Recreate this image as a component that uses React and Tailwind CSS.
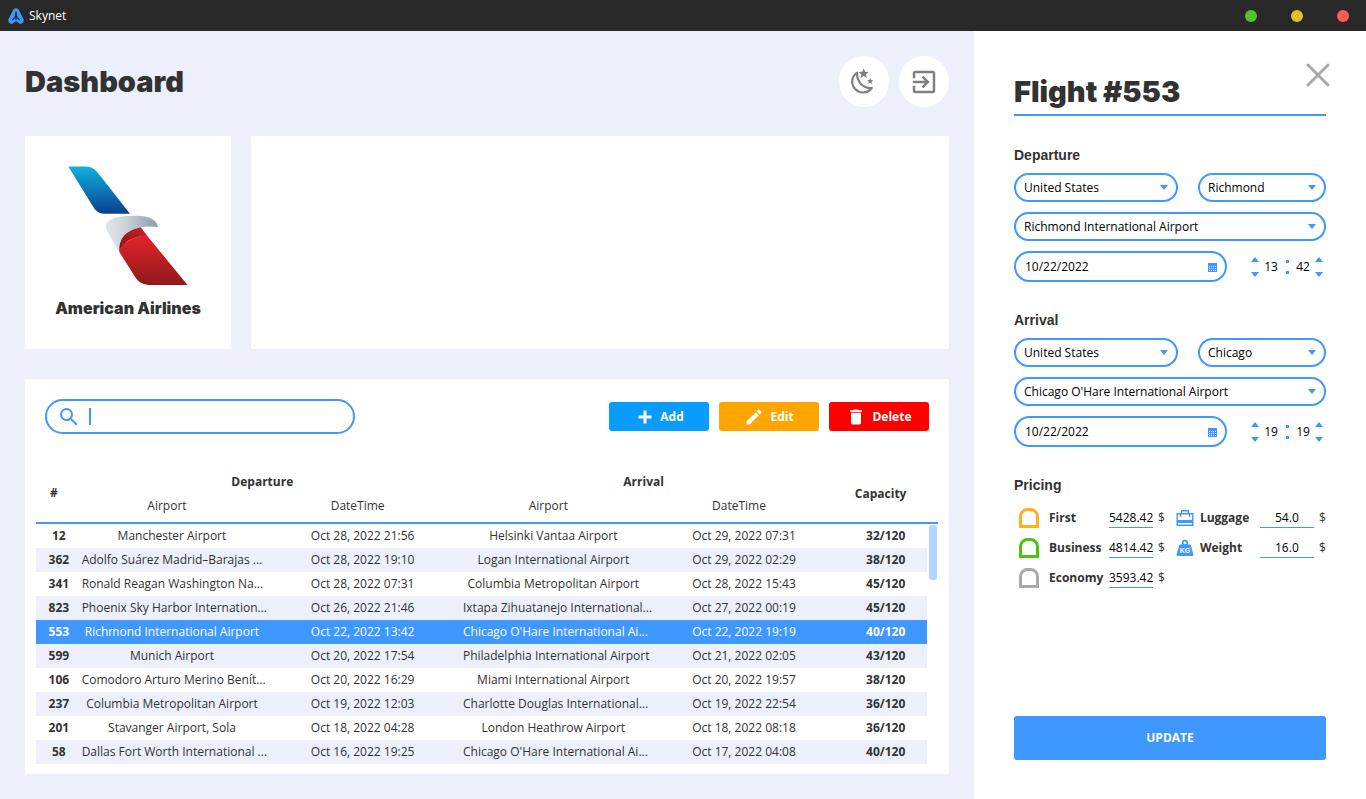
import React, { useState } from "react";
import { MdEdit, MdDelete, MdSearch, MdExitToApp } from "react-icons/md";

const flights = [
  ["12", "Manchester Airport", "Oct 28, 2022 21:56", "Helsinki Vantaa Airport", "Oct 29, 2022 07:31", "32/120"],
  ["362", "Adolfo Suárez Madrid–Barajas ...", "Oct 28, 2022 19:10", "Logan International Airport", "Oct 29, 2022 02:29", "38/120"],
  ["341", "Ronald Reagan Washington Na...", "Oct 28, 2022 07:31", "Columbia Metropolitan Airport", "Oct 28, 2022 15:43", "45/120"],
  ["823", "Phoenix Sky Harbor Internation...", "Oct 26, 2022 21:46", "Ixtapa Zihuatanejo International...", "Oct 27, 2022 00:19", "45/120"],
  ["553", "Richmond International Airport", "Oct 22, 2022 13:42", "Chicago O'Hare International Ai...", "Oct 22, 2022 19:19", "40/120"],
  ["599", "Munich Airport", "Oct 20, 2022 17:54", "Philadelphia International Airport", "Oct 21, 2022 02:05", "43/120"],
  ["106", "Comodoro Arturo Merino Benít...", "Oct 20, 2022 16:29", "Miami International Airport", "Oct 20, 2022 19:57", "38/120"],
  ["237", "Columbia Metropolitan Airport", "Oct 19, 2022 12:03", "Charlotte Douglas International...", "Oct 19, 2022 22:54", "36/120"],
  ["201", "Stavanger Airport, Sola", "Oct 18, 2022 04:28", "London Heathrow Airport", "Oct 18, 2022 08:18", "36/120"],
  ["58", "Dallas Fort Worth International ...", "Oct 16, 2022 19:25", "Chicago O'Hare International Ai...", "Oct 17, 2022 04:08", "40/120"],
];

function AppLogo() {
  return (
    <svg viewBox="0 0 16 16" className="h-4 w-4" aria-hidden="true">
      <path
        d="M5.300 1.800C6.300-.2 9.700-.2 10.700 1.800L15.500 11.300C16.700 13.800 14 16.800 11.300 15.400L8 13 4.700 15.400C2 16.800-.7 13.800.5 11.300Z"
        fill="#3f98ff"
      />
      <path d="M8 3.800 9 9.500 11.800 12.200M8 3.800 7 9.500 4.200 12.200" fill="none" stroke="#282828" strokeWidth="1.100" />
      <path d="M8 3.600 9 9.800 8 12.500 7 9.800Z" fill="#282828" />
    </svg>
  );
}

function PlusIcon() {
  return (
    <svg viewBox="0 0 20 20" className="h-5 w-5" aria-hidden="true">
      <path d="M11 3.500v13M4.500 10h13" stroke="currentColor" strokeWidth="3" />
    </svg>
  );
}

function MoonIcon() {
  return (
    <svg viewBox="0 0 28 28" className="h-7 w-7" aria-hidden="true">
      <path
        d="M7.200 4.600A10.800 10.800 0 1 0 21.800 20C13.500 20.800 6.200 13.500 7.200 4.600Z"
        fill="none"
        stroke="#808080"
        strokeWidth="2.200"
        strokeLinejoin="round"
      />
      <path d="M13.700.4l1.400 3.300 3.600.3-2.700 2.400.8 3.500-3.100-1.900-3.100 1.900.8-3.500L8.700 4l3.600-.3z" fill="#808080" />
      <path d="M20.200 10l.9 2 2.200.2-1.700 1.500.5 2.200-1.900-1.200-1.900 1.200.5-2.200-1.700-1.500 2.200-.2z" fill="#808080" />
    </svg>
  );
}

function AirlineLogo() {
  return (
    <svg viewBox="0 0 120 120" className="h-[120px] w-[120px]" role="img" aria-label="American Airlines logo">
      <defs>
        <linearGradient id="blue" x1="0" y1="0" x2="0" y2="1">
          <stop offset="0" stopColor="#12b0e2" />
          <stop offset="1" stopColor="#093f8c" />
        </linearGradient>
        <linearGradient id="silver" x1="0" y1="0" x2="1" y2="0">
          <stop offset="0" stopColor="#e3e8ec" />
          <stop offset="0.4" stopColor="#c8d0d7" />
          <stop offset="1" stopColor="#8b9aa7" />
        </linearGradient>
        <linearGradient id="fold" x1="0" y1="1" x2="1" y2="0">
          <stop offset="0" stopColor="#7c1518" />
          <stop offset="1" stopColor="#d22027" />
        </linearGradient>
        <linearGradient id="red" x1="0" y1="0" x2="0" y2="1">
          <stop offset="0" stopColor="#e52329" />
          <stop offset="1" stopColor="#8f1a1e" />
        </linearGradient>
      </defs>
      <path d="M0.300.6H17C23.500.6 27 3.300 31 8.300L62 47.800H37.500C31.500 47.800 28.500 46 25.300 41Z" fill="url(#blue)" />
      <path d="M38 61.700C37 53 48 49.700 68.700 49.700C82 49.700 89 54.500 90 61C83 60.200 78 60.300 72.700 61.300C58 64.500 50.500 72 51.300 86L40 67C38.700 65 38.100 63.500 38 61.700Z" fill="url(#silver)" />
      <path d="M72.700 61.300L79 69.500C64 71 55 76 51.300 86C50.500 72 58 64.500 72.700 61.300Z" fill="url(#fold)" />
      <path d="M51.300 86C54 76.500 64 71 78.500 69L119.500 119H84C75 119 70.500 116.500 67 110.700Z" fill="url(#red)" />
    </svg>
  );
}

function SeatIcon({ color }) {
  return (
    <svg viewBox="0 0 20 20" className="h-5 w-5" aria-hidden="true">
      <path d="M1.500 18.500V8.500a7 7 0 0 1 7-7h3a7 7 0 0 1 7 7v10z" fill="none" stroke={color} strokeWidth="3" />
    </svg>
  );
}

function LuggageIcon() {
  return (
    <svg viewBox="0 0 18 18" className="h-[18px] w-[18px]" aria-hidden="true">
      <path d="M5.700 4.500V1.700h6.600v2.800" fill="none" stroke="#3f98ff" strokeWidth="1.400" />
      <path d="M1.200 4.700h15.600v11.600H1.200z" fill="none" stroke="#3f98ff" strokeWidth="1.400" />
      <path d="M4.500 4.700v3.300M13.500 4.700v3.300" stroke="#3f98ff" strokeWidth="1.400" />
      <path d="M1 11h16v3H1z" fill="#3f98ff" />
    </svg>
  );
}

function WeightIcon() {
  return (
    <svg viewBox="0 0 18 18" className="h-[18px] w-[18px]" aria-hidden="true">
      <circle cx="9" cy="4" r="2.300" fill="none" stroke="#3f98ff" strokeWidth="1.700" />
      <path d="M4.500 5.500h9c.8 0 1.300.4 1.500 1.200l2.400 8.800c.2.900-.3 1.500-1.200 1.500H1.800c-.9 0-1.400-.6-1.200-1.500L3 6.700c.2-.8.700-1.200 1.500-1.200z" fill="#3f98ff" />
      <text x="9" y="14" textAnchor="middle" fontSize="7" fontWeight="700" fill="#fff" fontFamily="Liberation Sans, sans-serif">KG</text>
    </svg>
  );
}

function CalendarIcon() {
  return (
    <svg viewBox="0 0 10 10" className="h-[10px] w-[10px]" aria-hidden="true">
      <path d="M1 1h9v9H1z" fill="#3f98ff" />
      <path d="M2 4.500h7M2 6.500h7M2 8.500h7" stroke="#fff" strokeWidth="1" strokeDasharray="1 1" />
    </svg>
  );
}

function Caret({ up = false, className = "" }) {
  return (
    <svg viewBox="0 0 8 5" className={`h-[5px] w-2 ${className}`} aria-hidden="true">
      <path d={up ? "M0 5 4 0l4 5z" : "M0 0h8L4 5z"} fill="#3f98ff" />
    </svg>
  );
}

function Picker({ label, value, className }) {
  return (
    <label className={`grid items-center ${className}`}>
      <select
        aria-label={label}
        className="col-start-1 row-start-1 h-[29px] w-full appearance-none rounded-full border-2 border-[#3f98ff] bg-white pr-6 pl-2 text-xs text-black outline-none"
      >
        <option>{value}</option>
      </select>
      <Caret className="pointer-events-none col-start-1 row-start-1 mr-[10px] justify-self-end" />
    </label>
  );
}

function Spinner({ label, value, reverse = false }) {
  return (
    <div className={reverse ? "flex flex-row-reverse items-center" : "flex items-center"}>
      <div className="flex flex-col gap-[10px]">
        <button type="button" aria-label={`Increase ${label}`}>
          <Caret up className="block" />
        </button>
        <button type="button" aria-label={`Decrease ${label}`}>
          <Caret className="block" />
        </button>
      </div>
      <input aria-label={label} defaultValue={value} className="w-6 bg-transparent text-center text-xs text-black outline-none" />
    </div>
  );
}

function FlightPoint({ title, country, city, airport, date, hour, minute }) {
  return (
    <fieldset>
      <legend className="font-['Liberation_Sans',sans-serif] text-sm leading-5 font-bold">{title}</legend>
      <div className="mt-2 flex flex-col gap-[10px]">
        <div className="flex gap-5">
          <Picker label={`${title} country`} value={country} className="w-[164px]" />
          <Picker label={`${title} city`} value={city} className="min-w-0 flex-1" />
        </div>
        <Picker label={`${title} airport`} value={airport} className="w-full" />
        <div className="flex items-center justify-between pr-[3px]">
          <div className="flex h-[31px] w-[213px] items-center rounded-full border-2 border-[#3f98ff] pr-2 pl-[9px]">
            <input aria-label={`${title} date`} defaultValue={date} className="min-w-0 flex-1 bg-transparent text-xs text-black outline-none" />
            <button type="button" aria-label={`Choose ${title.toLowerCase()} date`}>
              <CalendarIcon />
            </button>
          </div>
          <div className="flex items-center">
            <Spinner label={`${title} hour`} value={hour} />
            <span className="flex w-2 flex-col items-center gap-2" aria-hidden="true">
              <span className="h-[3px] w-[3px] bg-[#3f98ff]" />
              <span className="h-[3px] w-[3px] bg-[#3f98ff]" />
            </span>
            <Spinner label={`${title} minute`} value={minute} reverse />
          </div>
        </div>
      </div>
    </fieldset>
  );
}

function Price({ id, icon, label, value, labelClass, inputClass }) {
  return (
    <div className="flex h-[30px] items-center">
      {icon}
      <label htmlFor={id} className={`w-[60px] text-xs font-bold ${labelClass}`}>
        {label}
      </label>
      <input
        id={id}
        defaultValue={value}
        className={`mr-[5px] h-5 border-b border-[#3f98ff] bg-transparent text-xs text-black outline-none ${inputClass}`}
      />
      <span className="text-xs">$</span>
    </div>
  );
}

function ActionButton({ icon, children, className }) {
  return (
    <button
      type="button"
      className={`flex h-[29px] w-[100px] items-center justify-center gap-1.5 rounded-[3px] text-xs font-bold text-white ${className}`}
    >
      {icon}
      {children}
    </button>
  );
}

export default function App() {
  const [selected, setSelected] = useState("553");
  return (
    <div className="flex min-h-screen flex-col bg-[#edf0fa] font-['Open_Sans','Noto_Sans',sans-serif] text-[#323232]">
      <header className="flex h-[31px] shrink-0 items-center justify-between bg-[#282828] pr-[17px] pl-2">
        <div className="flex items-center gap-[5px] text-xs text-white">
          <AppLogo />
          <span>Skynet</span>
        </div>
        <div className="flex gap-[34px]">
          <button type="button" aria-label="Minimize" className="h-3 w-3 rounded-full bg-[#55c22b]" />
          <button type="button" aria-label="Maximize" className="h-3 w-3 rounded-full bg-[#e5bf2b]" />
          <button type="button" aria-label="Close window" className="h-3 w-3 rounded-full bg-[#ff5b52]" />
        </div>
      </header>

      <div className="flex flex-1">
        <main className="min-w-0 flex-1 px-[25px] pt-[25px] pb-[25px]">
          <div className="flex items-center justify-between">
            <h1 className="font-['Inter',sans-serif] text-[29px] leading-8 font-black">Dashboard</h1>
            <div className="flex gap-[10px]">
              <button type="button" aria-label="Dark mode" className="flex h-[51px] w-[50px] items-center justify-center rounded-full bg-white">
                <MoonIcon />
              </button>
              <button type="button" aria-label="Log out" className="flex h-[51px] w-[50px] items-center justify-center rounded-full bg-white text-[#808080]">
                <MdExitToApp className="h-[30px] w-[30px]" />
              </button>
            </div>
          </div>

          <div className="mt-[29px] flex gap-5">
            <section className="flex h-[213px] w-[206px] shrink-0 flex-col items-center bg-white pt-[30px]">
              <AirlineLogo />
              <h2 className="mt-3 font-['Inter',sans-serif] text-base leading-5 font-black">American Airlines</h2>
            </section>
            <section className="flex-1 bg-white" />
          </div>

          <section className="mt-[30px] bg-white pt-5 pb-[10px] pl-[11px]">
            <div className="flex items-center justify-between pr-5 pl-[9px]">
              <label className="flex h-[35px] w-[310px] items-center rounded-full border-2 border-[#3f98ff] pl-[10px]">
                <MdSearch className="h-6 w-6 text-[#3f98ff]" />
                <span className="ml-2 h-[17px] w-[2px] bg-[#3f98ff]" />
                <input aria-label="Search flights" className="min-w-0 flex-1 bg-transparent px-1 text-sm outline-none" />
              </label>
              <div className="flex gap-[10px]">
                <ActionButton icon={<PlusIcon />} className="bg-[#0a9bff]">Add</ActionButton>
                <ActionButton icon={<MdEdit className="h-5 w-5" />} className="bg-[#ffa500]">Edit</ActionButton>
                <ActionButton icon={<MdDelete className="h-5 w-5" />} className="bg-[#ff0000]">Delete</ActionButton>
              </div>
            </div>

            <div className="mt-9 flex pr-[11px]">
              <div className="min-w-0 flex-1">
                <table className="w-full table-fixed border-separate border-spacing-0 text-center text-xs">
                  <colgroup>
                    <col className="w-[4%]" />
                    <col className="w-[21.4%]" />
                    <col className="w-[21.4%]" />
                    <col className="w-[21.4%]" />
                    <col className="w-[21.4%]" />
                    <col className="w-[10.4%]" />
                  </colgroup>
                  <thead>
                    <tr className="h-6">
                      <th rowSpan={2} className="border-b-2 border-[#3f98ff] p-0 pb-1.5">#</th>
                      <th colSpan={2} className="p-0">Departure</th>
                      <th colSpan={2} className="p-0">Arrival</th>
                      <th rowSpan={2} className="border-b-2 border-[#3f98ff] p-0 pb-1">Capacity</th>
                    </tr>
                    <tr className="h-[30px]">
                      {["Airport", "DateTime", "Airport", "DateTime"].map((name, i) => (
                        <th key={i} className="border-b-2 border-[#3f98ff] p-0 pb-1 font-normal">{name}</th>
                      ))}
                    </tr>
                  </thead>
                  <tbody>
                    {flights.map((row) => (
                      <tr
                        key={row[0]}
                        onClick={() => setSelected(row[0])}
                        className={row[0] === selected ? "h-6 bg-[#3f98ff] text-white" : "h-6 even:bg-[#edf0fa]"}
                      >
                        {row.map((cell, i) => (
                          <td key={i} className={i === 0 || i === 5 ? "p-0 pl-[10px] font-bold" : "p-0 pl-[10px] whitespace-nowrap"}>
                            {cell}
                          </td>
                        ))}
                      </tr>
                    ))}
                  </tbody>
                </table>
              </div>
              <div className="w-[11px] shrink-0">
                <div className="h-[54px] border-b-2 border-[#3f98ff]" />
                <div className="mt-px ml-[2px] h-[55px] w-2 rounded-[3px] bg-[#b2d6ff]" />
              </div>
            </div>
          </section>
        </main>

        <aside className="flex w-[392px] shrink-0 flex-col bg-white px-10 pt-8 pb-[39px]">
          <button type="button" aria-label="Close panel" className="-mr-1 self-end">
            <svg viewBox="0 0 24 24" className="block h-6 w-6" aria-hidden="true">
              <path d="M2 2l20 20M22 2 2 22" stroke="#a9a9a9" strokeWidth="3" strokeLinecap="round" />
            </svg>
          </button>
          <h2 className="-mt-[11px] border-b-2 border-[#3f98ff] pb-1.5 font-['Inter',sans-serif] text-[29px] leading-8 font-black">
            Flight #553
          </h2>
          <form className="flex flex-1 flex-col pt-[29px]" onSubmit={(e) => e.preventDefault()}>
            <div className="flex flex-col gap-7">
              <FlightPoint
                title="Departure"
                country="United States"
                city="Richmond"
                airport="Richmond International Airport"
                date="10/22/2022"
                hour="13"
                minute="42"
              />
              <FlightPoint
                title="Arrival"
                country="United States"
                city="Chicago"
                airport="Chicago O'Hare International Airport"
                date="10/22/2022"
                hour="19"
                minute="19"
              />
              <fieldset>
                <legend className="font-['Liberation_Sans',sans-serif] text-sm leading-5 font-bold">Pricing</legend>
                <div className="mt-2 flex gap-[11px] pl-[5px]">
                  <div>
                    <Price id="first" icon={<SeatIcon color="#ffb020" />} label="First" value="5428.42" labelClass="ml-[10px]" inputClass="w-11" />
                    <Price id="business" icon={<SeatIcon color="#4dc20f" />} label="Business" value="4814.42" labelClass="ml-[10px]" inputClass="w-11" />
                    <Price id="economy" icon={<SeatIcon color="#a9a9a9" />} label="Economy" value="3593.42" labelClass="ml-[10px]" inputClass="w-11" />
                  </div>
                  <div>
                    <Price id="luggage" icon={<LuggageIcon />} label="Luggage" value="54.0" labelClass="ml-1.5" inputClass="w-[54px] text-center" />
                    <Price id="weight" icon={<WeightIcon />} label="Weight" value="16.0" labelClass="ml-1.5" inputClass="w-[54px] text-center" />
                  </div>
                </div>
              </fieldset>
            </div>
            <button type="submit" className="mt-auto h-11 w-full rounded-[3px] bg-[#3f98ff] text-xs font-bold text-white">
              UPDATE
            </button>
          </form>
        </aside>
      </div>
    </div>
  );
}
